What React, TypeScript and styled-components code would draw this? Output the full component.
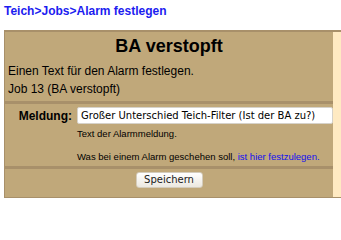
import React from 'react';
import styled, { createGlobalStyle } from 'styled-components';

const GlobalStyle = createGlobalStyle`
    html, body {
        margin: 0;
        padding: 0;
        background: #ffffff;
        overflow: hidden;
    }

    body {
        font-family: 'Liberation Sans', Arial, sans-serif;
        color: #000000;
    }
`;

const Breadcrumb = styled.div`
    padding: 4px 4px 0;
    height: 14px;
    font-size: 12px;
    line-height: 14px;
    font-weight: bold;
`;

const CrumbLink = styled.a`
    color: #1c1cf0;
    text-decoration: none;
`;

const Panel = styled.div`
    display: flex;
    margin: 12px 0 0 4px;
    border-top: 2px solid #a8906a;
    border-left: 1px solid #a8906a;
    border-bottom: 1px solid #a8906a;
`;

const Main = styled.div`
    width: 330px;
    display: flex;
    flex-direction: column;
    gap: 3px;
    background: #a8906a;
`;

const Aside = styled.div`
    flex: 1;
    min-width: 20px;
    background: #ffeac2;
`;

const Section = styled.div<{ $pad: string }>`
    background: #c0a87a;
    padding: ${(p) => p.$pad};
`;

const Title = styled.h2`
    margin: 0 0 7px;
    font-size: 18px;
    line-height: 22px;
    text-align: center;
`;

const Line = styled.p<{ $gap?: number }>`
    margin: 0 0 ${(p) => p.$gap ?? 0}px;
    padding-left: 3px;
    font-size: 12px;
    line-height: 14px;
`;

const FormGrid = styled.div`
    display: grid;
    grid-template-columns: 67px 256px;
    column-gap: 5px;
    align-items: center;
`;

const Label = styled.label`
    font-size: 12px;
    font-weight: bold;
    text-align: right;
    line-height: 14px;
`;

const TextInput = styled.input`
    box-sizing: border-box;
    width: 256px;
    height: 17px;
    margin: 0;
    padding: 0 3px;
    border: 1px solid #d6d2ca;
    border-radius: 2px;
    background: #ffffff;
    font-family: 'DejaVu Sans', Verdana, sans-serif;
    font-size: 10px;
    color: #000000;
    outline: none;
`;

const Hint = styled.div<{ $top: number }>`
    grid-column: 2;
    margin-top: ${(p) => p.$top}px;
    font-size: 9.5px;
    line-height: 12px;
`;

const InlineLink = styled.a`
    color: #1010f0;
    text-decoration: none;
`;

const ButtonRow = styled.div`
    display: flex;
    justify-content: center;
`;

const SaveButton = styled.button`
    box-sizing: border-box;
    width: 67px;
    height: 16px;
    padding: 0;
    border: 1px solid #d4ccbc;
    border-radius: 3px;
    background: linear-gradient(#ffffff, #ece8e0);
    font-family: 'DejaVu Sans', Verdana, sans-serif;
    font-size: 10px;
    line-height: 14px;
    color: #1a1a1a;
`;

const App: React.FC = () => {
    return (
        <>
            <GlobalStyle />
            <Breadcrumb>
                <CrumbLink href="#">Teich</CrumbLink>
                <CrumbLink href="#">&gt;Jobs</CrumbLink>
                <CrumbLink href="#">&gt;Alarm festlegen</CrumbLink>
            </Breadcrumb>

            <Panel>
                <Main>
                    <Section $pad="3px 0 5px">
                        <Title>BA verstopft</Title>
                        <Line $gap={4}>Einen Text für den Alarm festlegen.</Line>
                        <Line>Job 13 (BA verstopft)</Line>
                    </Section>

                    <Section $pad="3px 0 3px">
                        <FormGrid>
                            <Label htmlFor="meldung">Meldung:</Label>
                            <TextInput
                                id="meldung"
                                defaultValue="Großer Unterschied Teich-Filter (Ist der BA zu?)"
                            />
                            <Hint $top={4}>Text der Alarmmeldung.</Hint>
                            <Hint $top={11}>
                                Was bei einem Alarm geschehen soll,{' '}
                                <InlineLink href="#">ist hier festzulegen.</InlineLink>
                            </Hint>
                        </FormGrid>
                    </Section>

                    <Section $pad="3px 0 9px">
                        <ButtonRow>
                            <SaveButton type="submit">Speichern</SaveButton>
                        </ButtonRow>
                    </Section>
                </Main>
                <Aside />
            </Panel>
        </>
    );
};

export default App;
